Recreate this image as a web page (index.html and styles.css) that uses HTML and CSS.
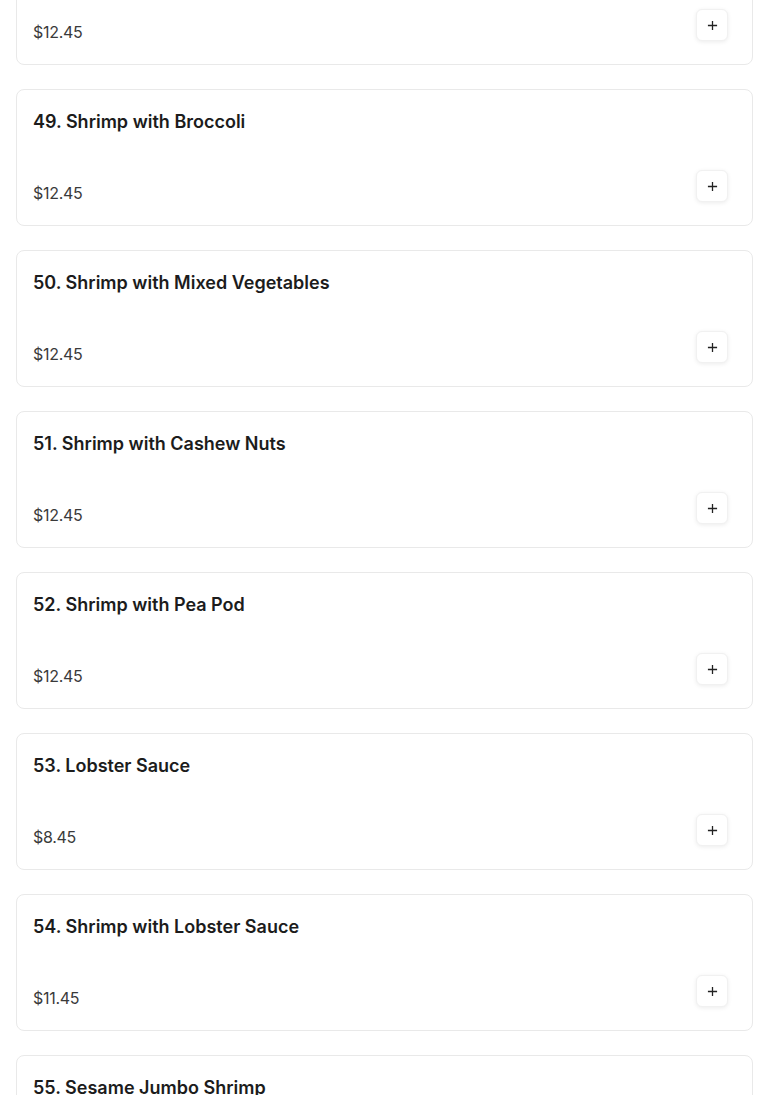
FILE: index.html
```html
<!DOCTYPE html>
<html lang="en">
<head>
    <meta charset="UTF-8">
    <meta name="viewport" content="width=device-width, initial-scale=1.0">
    <title>Menu - Shrimp</title>
    <link rel="stylesheet" href="styles.css">
</head>
<body>
    <ul class="menu-list">
        <li class="menu-item">
            <h3 class="item-name">48. Kung Pao Shrimp</h3>
            <div class="item-footer">
                <span class="item-price">$12.45</span>
                <button class="add-btn" aria-label="Add"><svg viewBox="0 0 12 12"><path d="M6 1v10M1 6h10"/></svg></button>
            </div>
        </li>
        <li class="menu-item">
            <h3 class="item-name">49. Shrimp with Broccoli</h3>
            <div class="item-footer">
                <span class="item-price">$12.45</span>
                <button class="add-btn" aria-label="Add"><svg viewBox="0 0 12 12"><path d="M6 1v10M1 6h10"/></svg></button>
            </div>
        </li>
        <li class="menu-item">
            <h3 class="item-name">50. Shrimp with Mixed Vegetables</h3>
            <div class="item-footer">
                <span class="item-price">$12.45</span>
                <button class="add-btn" aria-label="Add"><svg viewBox="0 0 12 12"><path d="M6 1v10M1 6h10"/></svg></button>
            </div>
        </li>
        <li class="menu-item">
            <h3 class="item-name">51. Shrimp with Cashew Nuts</h3>
            <div class="item-footer">
                <span class="item-price">$12.45</span>
                <button class="add-btn" aria-label="Add"><svg viewBox="0 0 12 12"><path d="M6 1v10M1 6h10"/></svg></button>
            </div>
        </li>
        <li class="menu-item">
            <h3 class="item-name">52. Shrimp with Pea Pod</h3>
            <div class="item-footer">
                <span class="item-price">$12.45</span>
                <button class="add-btn" aria-label="Add"><svg viewBox="0 0 12 12"><path d="M6 1v10M1 6h10"/></svg></button>
            </div>
        </li>
        <li class="menu-item">
            <h3 class="item-name">53. Lobster Sauce</h3>
            <div class="item-footer">
                <span class="item-price">$8.45</span>
                <button class="add-btn" aria-label="Add"><svg viewBox="0 0 12 12"><path d="M6 1v10M1 6h10"/></svg></button>
            </div>
        </li>
        <li class="menu-item">
            <h3 class="item-name">54. Shrimp with Lobster Sauce</h3>
            <div class="item-footer">
                <span class="item-price">$11.45</span>
                <button class="add-btn" aria-label="Add"><svg viewBox="0 0 12 12"><path d="M6 1v10M1 6h10"/></svg></button>
            </div>
        </li>
        <li class="menu-item">
            <h3 class="item-name">55. Sesame Jumbo Shrimp</h3>
            <div class="item-footer">
                <span class="item-price">$12.45</span>
                <button class="add-btn" aria-label="Add"><svg viewBox="0 0 12 12"><path d="M6 1v10M1 6h10"/></svg></button>
            </div>
        </li>
    </ul>
</body>
</html>
```

FILE: styles.css
```css
body {
    margin: 0;
    background-color: #fff;
    color: #1c1c1c;
    font-family: Inter, "Noto Sans", Arial, sans-serif;
}

.menu-list {
    list-style: none;
    margin: -72px 0 0;
    padding: 0 17px 24px 16px;
    display: flex;
    flex-direction: column;
    gap: 24px;
}

.menu-item {
    box-sizing: border-box;
    height: 137px;
    padding: 20px 24px 20px 16px;
    border: 1px solid #e9e9e9;
    border-radius: 8px;
    background-color: #fff;
    display: flex;
    flex-direction: column;
    justify-content: space-between;
}

.item-name {
    margin: 0;
    font-size: 18px;
    line-height: 24px;
    font-weight: 600;
    color: #1c1c1c;
}

.item-footer {
    display: flex;
    align-items: flex-end;
    justify-content: space-between;
}

.item-price {
    font-size: 16px;
    line-height: 24px;
    letter-spacing: -0.3px;
    color: #3a3a3a;
}

.add-btn {
    width: 32px;
    height: 32px;
    margin-bottom: 3px;
    padding: 0;
    border: 1px solid #f1f1f1;
    border-radius: 6px;
    background-color: #fff;
    box-shadow: 0 1px 4px rgba(0, 0, 0, 0.08);
    display: flex;
    align-items: center;
    justify-content: center;
    cursor: pointer;
}

.add-btn svg {
    width: 11px;
    height: 11px;
    stroke: #222;
    stroke-width: 1.4;
    fill: none;
}
```
